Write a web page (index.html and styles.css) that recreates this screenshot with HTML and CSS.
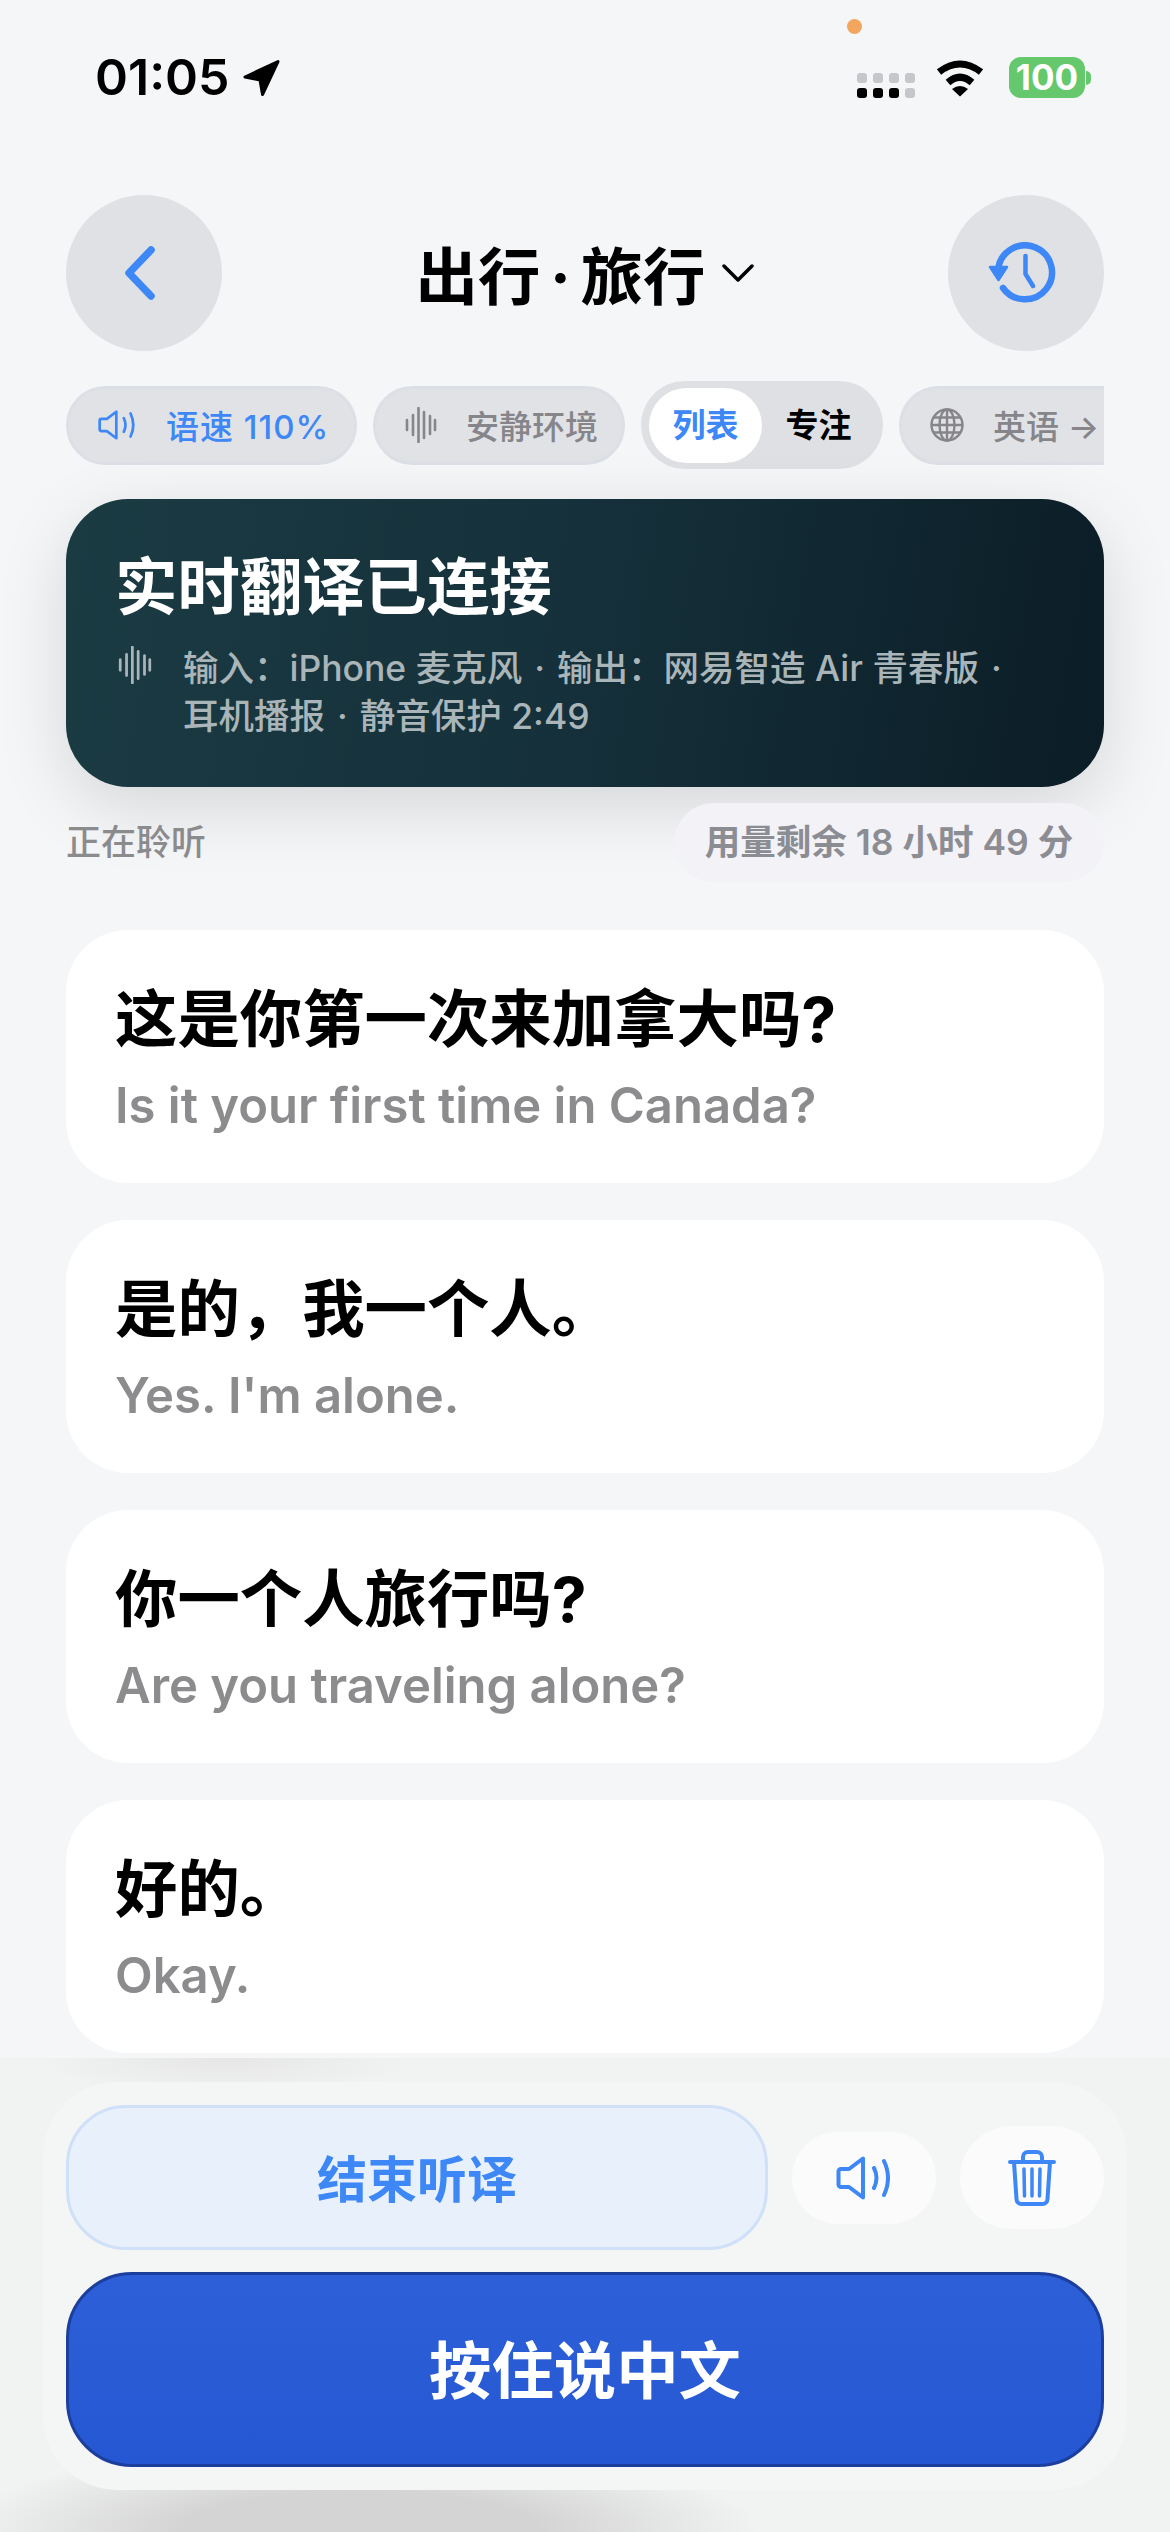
FILE: index.html
```html
<!DOCTYPE html>
<html lang="zh-CN">
<head>
    <meta charset="UTF-8">
    <meta name="viewport" content="width=device-width, initial-scale=1.0">
    <title>实时翻译</title>
    <link rel="stylesheet" href="styles.css">
</head>
<body>
    <svg class="defs" width="0" height="0">
        <symbol id="speaker" viewBox="0 0 56 44">
            <path d="M2.5 15.5A2.5 2.5 0 0 1 5 13H13L27 2.5V41.5L13 31H5A2.5 2.5 0 0 1 2.5 28.5Z" fill="none" stroke="currentColor" stroke-width="4" stroke-linejoin="round"/>
            <path d="M38 12Q43 22 38 32M48 5Q56 22 48 39" fill="none" stroke="currentColor" stroke-width="4" stroke-linecap="round"/>
        </symbol>
        <symbol id="wave" viewBox="0 0 32 36">
            <path d="M2 13V23M8 8V28M13.500 1V35M19 5V31M25 9V27M30 13V23" fill="none" stroke="currentColor" stroke-width="2.600" stroke-linecap="round"/>
        </symbol>
    </svg>

    <div class="cam-dot"></div>

    <header class="status">
        <div class="status-left">
            <span class="time">01:05</span>
            <svg class="loc" width="40" height="40" viewBox="0 0 40 40"><path d="M36 3.500L3 19L18 22L20.500 36.500Z" fill="#000" stroke="#000" stroke-width="3" stroke-linejoin="round"/></svg>
        </div>
        <div class="status-right">
            <div class="signal">
                <i></i><i></i><i></i><i></i>
                <i class="on"></i><i class="on"></i><i class="on"></i><i></i>
            </div>
            <svg class="wifi" width="50" height="38" viewBox="0 0 50 38">
                <path d="M4 13Q25 -3 46 13M13 23.500Q25 13 37 23.500" fill="none" stroke="#000" stroke-width="7"/>
                <path d="M17 30Q25 24 33 30L25 37.500Z" fill="#000"/>
            </svg>
            <div class="battery"><span class="battery-level">100</span><span class="battery-nub"></span></div>
        </div>
    </header>

    <nav class="nav">
        <button class="round-btn">
            <svg class="back-icon" width="30" height="54" viewBox="0 0 30 54"><path d="M26 4L4 27L26 50" fill="none" stroke="#3d87f6" stroke-width="7.500" stroke-linecap="round" stroke-linejoin="round"/></svg>
        </button>
        <div class="nav-title">
            <span>出行 · 旅行</span>
            <svg width="32" height="18" viewBox="0 0 32 18"><path d="M2 2L16 16L30 2" fill="none" stroke="#000" stroke-width="3.500" stroke-linecap="round" stroke-linejoin="round"/></svg>
        </div>
        <button class="round-btn">
            <svg width="75" height="62" viewBox="0 0 75 62">
                <path d="M10.200 27A27 27 0 1 1 15 46" fill="none" stroke="#3d87f6" stroke-width="6.500" stroke-linecap="round"/>
                <path d="M2 25H19L10.500 38Z" fill="#3d87f6" stroke="#3d87f6" stroke-width="2.500" stroke-linejoin="round"/>
                <path d="M37.500 14V32L45 44" fill="none" stroke="#3d87f6" stroke-width="4.500" stroke-linecap="round" stroke-linejoin="round"/>
            </svg>
        </button>
    </nav>

    <div class="chips">
        <div class="chip chip-speed">
            <svg width="38" height="30"><use href="#speaker"/></svg>
            <span>语速 110%</span>
        </div>
        <div class="chip chip-env">
            <svg width="32" height="36"><use href="#wave"/></svg>
            <span>安静环境</span>
        </div>
        <div class="toggle">
            <span class="toggle-item active">列表</span>
            <span class="toggle-item">专注</span>
        </div>
        <div class="chip chip-lang">
            <svg width="34" height="34" viewBox="0 0 34 34" fill="none" stroke="currentColor" stroke-width="2.400">
                <circle cx="17" cy="17" r="15.500"/>
                <ellipse cx="17" cy="17" rx="7.500" ry="15.500"/>
                <path d="M17 1.500V32.500M1.500 17H32.500M3.500 9.500H30.500M3.500 24.500H30.500"/>
            </svg>
            <span>英语 →</span>
        </div>
    </div>

    <section class="hero">
        <h1>实时翻译已连接</h1>
        <div class="hero-info">
            <svg width="36" height="38"><use href="#wave"/></svg>
            <p>输入：iPhone 麦克风<span class="sep">·</span>输出：网易智造 Air 青春版<span class="sep">·</span><br>耳机播报<span class="sep">·</span>静音保护 2:49</p>
        </div>
    </section>

    <div class="meta">
        <span class="meta-state">正在聆听</span>
        <span class="meta-pill">用量剩余 18 小时 49 分</span>
    </div>

    <main class="cards">
        <article class="card">
            <h2>这是你第一次来加拿大吗?</h2>
            <p>Is it your first time in Canada?</p>
        </article>
        <article class="card">
            <h2>是的，我一个人。</h2>
            <p>Yes. I'm alone.</p>
        </article>
        <article class="card">
            <h2>你一个人旅行吗?</h2>
            <p>Are you traveling alone?</p>
        </article>
        <article class="card">
            <h2>好的。</h2>
            <p>Okay.</p>
        </article>
    </main>

    <footer class="dock">
        <div class="panel">
            <div class="panel-row">
                <button class="end-btn">结束听译</button>
                <button class="tool-btn tool-speaker">
                    <svg width="56" height="44"><use href="#speaker"/></svg>
                </button>
                <button class="tool-btn tool-trash">
                    <svg width="48" height="56" viewBox="0 0 48 56" fill="none" stroke="currentColor" stroke-width="4" stroke-linecap="round" stroke-linejoin="round">
                        <path d="M2 12H46M15 11V7A5 5 0 0 1 20 2H29A5 5 0 0 1 34 7V11M6 12L8.500 49A5 5 0 0 0 13.500 54H34.500A5 5 0 0 0 39.500 49L42 12"/>
                        <path d="M16 19L16.500 46M24 19V46M32 19L31.500 46" stroke-width="3.500"/>
                    </svg>
                </button>
            </div>
            <button class="talk-btn">按住说中文</button>
        </div>
    </footer>
</body>
</html>
```

FILE: styles.css
```css
* {
    box-sizing: border-box;
}
body {
    margin: 0;
    width: 1170px;
    height: 2532px;
    overflow: hidden;
    position: relative;
    display: flex;
    flex-direction: column;
    background: #f5f6f8;
    color: #000;
    font-family: Inter, "Noto Sans CJK SC", sans-serif;
}
button {
    border: none;
    padding: 0;
    font-family: inherit;
    display: flex;
    align-items: center;
    justify-content: center;
}
.defs {
    position: absolute;
}
.cam-dot {
    position: absolute;
    left: 847px;
    top: 19px;
    width: 15px;
    height: 15px;
    border-radius: 50%;
    background: #f2a65e;
}

/* status bar */
.status {
    height: 195px;
    flex-shrink: 0;
    padding: 57px 79px 0 95px;
    display: flex;
    justify-content: space-between;
    align-items: flex-start;
}
.status-left {
    display: flex;
    align-items: center;
    gap: 12px;
    height: 41px;
}
.time {
    font-size: 50px;
    font-weight: 600;
    line-height: 41px;
}
.status-right {
    display: flex;
    align-items: center;
    height: 41px;
}
.signal {
    display: grid;
    grid-template-columns: repeat(4, 10px);
    grid-auto-rows: 10px;
    gap: 5px 6px;
    margin-top: 16px;
}
.signal i {
    border-radius: 3px;
    background: #c6c7ca;
}
.signal i.on {
    background: #000;
}
.wifi {
    margin: 0 24px 0 20px;
}
.battery {
    display: flex;
    align-items: center;
}
.battery-level {
    width: 76px;
    height: 41px;
    border-radius: 12px;
    background: #65c86c;
    color: #fff;
    font-size: 35px;
    font-weight: 700;
    line-height: 41px;
    text-align: center;
}
.battery-nub {
    width: 5px;
    height: 14px;
    margin-left: 1px;
    border-radius: 0 5px 5px 0;
    background: #65c86c;
}

/* nav */
.nav {
    height: 156px;
    flex-shrink: 0;
    margin: 0 66px;
    display: flex;
    justify-content: space-between;
    align-items: center;
}
.round-btn {
    width: 156px;
    height: 156px;
    border-radius: 50%;
    background: #e0e1e4;
}
.back-icon {
    margin-right: 8px;
}
.nav-title {
    display: flex;
    align-items: center;
    gap: 17px;
    font-size: 62.4px;
    font-weight: 700;
}
.nav-title span {
    word-spacing: -5px;
}

/* chips */
.chips {
    height: 88px;
    flex-shrink: 0;
    margin: 30px 66px 0;
    display: flex;
    align-items: center;
    gap: 16px;
    overflow: hidden;
}
.chip {
    height: 79px;
    flex-shrink: 0;
    display: flex;
    align-items: center;
    border: 3px solid #dcdfe5;
    border-radius: 40px;
    background: #e1e2e5;
    color: #85858a;
    font-size: 33px;
    font-weight: 500;
}
.chip-speed {
    width: 291px;
    padding-left: 29px;
    gap: 30px;
    color: #3d87f6;
    letter-spacing: 1px;
}
.chip-env {
    width: 252px;
    padding-left: 29px;
    gap: 29px;
}
.chip-lang {
    width: 300px;
    padding-left: 28px;
    gap: 29px;
}
.toggle {
    width: 242px;
    height: 88px;
    flex-shrink: 0;
    padding: 6px 8px;
    display: flex;
    align-items: center;
    border-radius: 44px;
    background: #dfe0e3;
    font-size: 33px;
    font-weight: 600;
}
.toggle-item {
    width: 114px;
    height: 75px;
    border-radius: 38px;
    line-height: 75px;
    text-align: center;
}
.toggle-item.active {
    background: #fff;
    color: #3d87f6;
}

/* connected banner */
.hero {
    height: 288px;
    flex-shrink: 0;
    margin: 30px 66px 0;
    padding: 50px 49px 0;
    border-radius: 62px;
    background: linear-gradient(100deg, #1b3b43 0%, #15303a 50%, #0b1d26 100%);
    box-shadow: 0 20px 70px rgba(0, 0, 0, 0.13);
    color: #fff;
}
.hero h1 {
    margin: 0;
    font-size: 62.4px;
    font-weight: 700;
    line-height: 78px;
}
.hero-info {
    margin-top: 18px;
    display: flex;
    gap: 30px;
    color: #a9b5b8;
}
.hero-info svg {
    flex-shrink: 0;
    margin-top: 1px;
    margin-left: 2px;
}
.hero-info p {
    margin: 0;
    font-size: 35.5px;
    font-weight: 500;
    line-height: 48px;
    white-space: nowrap;
}
.sep {
    margin: 0 12px;
}

.meta {
    height: 79px;
    flex-shrink: 0;
    margin: 16px 66px 0;
    display: flex;
    justify-content: space-between;
    align-items: center;
}
.meta-state {
    margin-bottom: 6px;
    font-size: 35px;
    font-weight: 500;
    color: #8b8b8d;
}
.meta-pill {
    width: 430px;
    height: 79px;
    border-radius: 40px;
    background: #f2f2f7;
    color: #8c8c93;
    font-size: 35.5px;
    font-weight: 600;
    line-height: 79px;
    text-align: center;
    white-space: nowrap;
}

/* transcript */
.cards {
    margin: 48px 66px 0;
    display: flex;
    flex-direction: column;
    gap: 37px;
}
.card {
    height: 253px;
    padding: 50px 49px 0;
    border-radius: 62px;
    background: #fff;
}
.card h2 {
    margin: 0;
    font-size: 62.4px;
    font-weight: 700;
    line-height: 80px;
}
.card p {
    margin: 10px 0 0;
    font-size: 49px;
    font-weight: 600;
    line-height: 72px;
    color: #8c8c8e;
}

/* bottom dock */
.dock {
    flex-grow: 1;
    margin-top: 5px;
    padding: 24px 43px 0;
    background:
        radial-gradient(ellipse 400px 90px at 360px 100%, #d4d4d4 45%, rgba(212, 212, 212, 0) 100%),
        radial-gradient(ellipse 190px 40px at 225px 0, #e6e6e6 0%, rgba(230, 230, 230, 0) 100%),
        #f1f2f2;
}
.panel {
    height: 408px;
    padding: 23px;
    border-radius: 74px;
    background: #f4f5f5;
}
.panel-row {
    height: 145px;
    display: flex;
    align-items: center;
    gap: 24px;
}
.end-btn {
    width: 702px;
    height: 145px;
    padding-bottom: 3px;
    border: 3px solid #cfe0f8;
    border-radius: 60px;
    background: #e8f0fb;
    color: #3d87f6;
    font-size: 50px;
    font-weight: 600;
}
.tool-btn {
    width: 144px;
    flex-shrink: 0;
    background: #fbfbfb;
    color: #3d87f6;
}
.tool-speaker {
    height: 92px;
    border-radius: 46px;
}
.tool-trash {
    height: 103px;
    border-radius: 52px;
}
.talk-btn {
    width: 100%;
    height: 195px;
    margin-top: 22px;
    padding-bottom: 6px;
    border: 3px solid #1c3f9e;
    border-radius: 66px;
    background: linear-gradient(180deg, #2d60d8, #2657d3);
    color: #fff;
    font-size: 62.4px;
    font-weight: 700;
}
```
